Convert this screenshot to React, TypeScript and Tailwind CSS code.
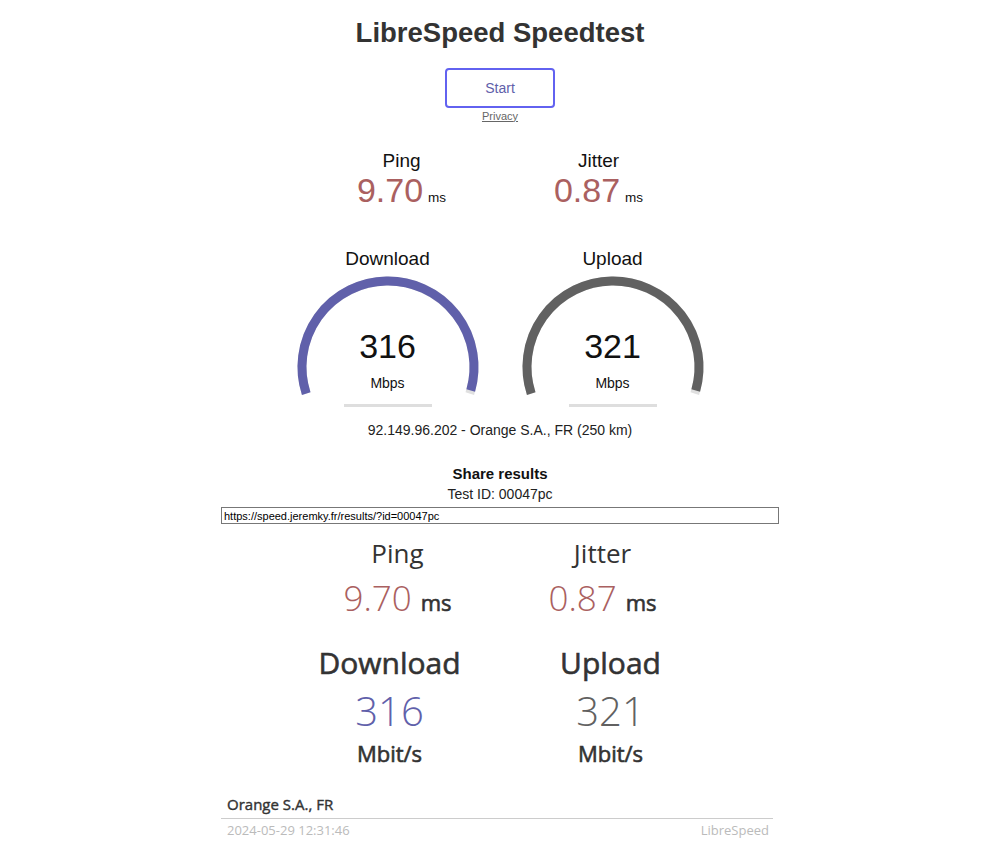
import React from "react"

const ARC_BG = "M 18.21 121.58 A 86 86 0 1 1 181.79 121.58"
const ARC_FG = "M 18.21 121.58 A 86 86 0 1 1 182.75 118.42"

function Gauge({ label, value, color }: { label: string; value: string; color: string }) {
  return (
    <div className="flex w-[225px] flex-col items-center">
      <div className="text-[19px] leading-[22px] text-[#111]">{label}</div>
      <div className="relative mt-[1.5px] h-[130px] w-[200px]">
        <svg className="absolute inset-0" width="200" height="130" viewBox="0 0 200 130">
          <path d={ARC_BG} fill="none" stroke="#E0E0E0" strokeWidth="9" />
          <path d={ARC_FG} fill="none" stroke={color} strokeWidth="9" />
        </svg>
        <div className="relative flex flex-col items-center pt-[57.5px]">
          <div className="text-[34px] leading-[34px] text-[#111]">{value}</div>
          <div className="mt-[11.5px] text-[14px] leading-[17px] text-[#111]">Mbps</div>
        </div>
      </div>
      <div className="mt-[2px] h-[3px] w-[88px] bg-[#dedede]" />
    </div>
  )
}

function SmallStat({ label, value }: { label: string; value: string }) {
  return (
    <div className="flex w-[197px] flex-col items-center">
      <div className="text-[19px] leading-[22px] text-[#111]">{label}</div>
      <div className="flex h-[36px] items-baseline gap-[5px]">
        <span className="text-[34px] leading-[36px] text-[#aa6060]">{value}</span>
        <span className="text-[13.5px] leading-[14px] text-[#111]">ms</span>
      </div>
    </div>
  )
}

// semi-bold look: Open Sans here only ships regular/bold, so thicken regular a bit
const SEMI = "[-webkit-text-stroke:0.6px_#333]"

function ResultStat({ label, value, unit, color }: { label: string; value: string; unit: string; color: string }) {
  return (
    <div className="flex w-[205px] flex-col items-center">
      <div className="text-[26px] leading-[30px] text-[#333]">{label}</div>
      <div className="mt-[10px] flex h-[40px] items-baseline gap-[9px]">
        <span className="text-[35px] font-light leading-[40px]" style={{ color }}>{value}</span>
        <span className={`text-[22px] leading-[24px] text-[#333] ${SEMI}`}>{unit}</span>
      </div>
    </div>
  )
}

function ResultSpeed({ label, value, unit, color }: { label: string; value: string; unit: string; color: string }) {
  return (
    <div className="flex w-[221px] flex-col items-center">
      <div className={`text-[30px] leading-[36px] text-[#333] ${SEMI}`}>{label}</div>
      <div className="mt-[7px] text-[40px] font-light leading-[46px]" style={{ color }}>{value}</div>
      <div className={`mt-[5px] text-[22px] leading-[28px] text-[#333] ${SEMI}`}>{unit}</div>
    </div>
  )
}

export default function App() {
  return (
    <div className="flex min-h-[845px] w-full flex-col items-center bg-white pt-[17px] font-['Liberation_Sans',Arial,sans-serif]">
      <h1 className="text-[27.5px] font-bold leading-[32px] text-[#333]">LibreSpeed Speedtest</h1>

      <button className="mt-[19px] h-[40px] w-[110px] rounded-[4px] border-2 border-[#6262f0] text-[14px] text-[#6060AA]">
        Start
      </button>
      <a className="mt-[1.5px] text-[11px] leading-[13px] text-[#666] underline">Privacy</a>

      <div className="mt-[27.5px] flex">
        <SmallStat label="Ping" value="9.70" />
        <SmallStat label="Jitter" value="0.87" />
      </div>

      <div className="mt-[40px] flex">
        <Gauge label="Download" value="316" color="#6060AA" />
        <Gauge label="Upload" value="321" color="#616161" />
      </div>

      <div className="mt-[15px] text-[14px] leading-[17px] text-[#222]">92.149.96.202 - Orange S.A., FR (250 km)</div>

      <div className="mt-[26.5px] text-[15px] font-bold leading-[18px] text-[#111]">Share results</div>
      <div className="mt-[2.5px] text-[14px] leading-[17px] text-[#222]">Test ID: 00047pc</div>
      <input
        readOnly
        value="https://speed.jeremky.fr/results/?id=00047pc"
        className="mt-[4.5px] h-[17px] w-[558px] border border-[#777] px-[2px] text-[11px] leading-[15px] text-black outline-none"
      />

      <div className="mt-[14px] flex w-[558px] flex-col font-['Open_Sans',sans-serif]">
        <div className="flex justify-center">
          <ResultStat label="Ping" value="9.70" unit="ms" color="#aa6060" />
          <ResultStat label="Jitter" value="0.87" unit="ms" color="#aa6060" />
        </div>
        <div className="mt-[27px] flex justify-center">
          <ResultSpeed label="Download" value="316" unit="Mbit/s" color="#6060AA" />
          <ResultSpeed label="Upload" value="321" unit="Mbit/s" color="#616161" />
        </div>
        <div className="mt-[27px] px-[6px] text-[15px] leading-[20px] text-[#333] [-webkit-text-stroke:0.4px_#333]">Orange S.A., FR</div>
        <div className="mr-[6px] mt-[4px] h-px bg-[#cccccc]" />
        <div className="mt-[3px] flex justify-between pl-[6px] pr-[10px] text-[13px] leading-[16px] text-[#bbbbbb]">
          <span>2024-05-29 12:31:46</span>
          <span>LibreSpeed</span>
        </div>
      </div>
    </div>
  )
}
